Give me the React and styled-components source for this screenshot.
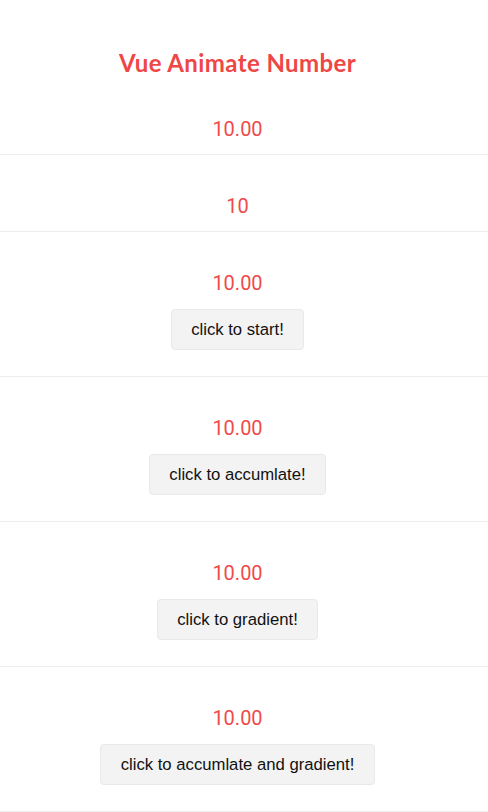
import React from 'react';
import styled, { createGlobalStyle } from 'styled-components';

const GlobalStyle = createGlobalStyle`
    html, body {
        margin: 0;
        padding: 0;
        background: #ffffff;
    }
    body {
        font-family: "Liberation Sans", Arial, sans-serif;
    }
`;

const Page = styled.div`
    width: 100%;
    display: flex;
    flex-direction: column;
`;

const Header = styled.header`
    padding: 48px 13px 0 0;
    text-align: center;
`;

const Title = styled.h1`
    margin: 0;
    font-family: Lato, "Noto Sans", sans-serif;
    font-weight: 700;
    font-size: 24px;
    line-height: 30px;
    letter-spacing: 0.4px;
    color: #ef4646;
`;

const Section = styled.section`
    display: flex;
    flex-direction: column;
    align-items: center;
    padding: 40px 13px 13px 0;
    border-bottom: 1px solid #ececec;
`;

const Value = styled.div`
    font-family: Roboto, "Noto Sans", sans-serif;
    font-size: 20px;
    line-height: 23px;
    color: #ef4a4a;
`;

const ActionButton = styled.button`
    margin: 14px 0 13px;
    padding: 10px 19.5px;
    border: 1px solid #e9e9e9;
    border-radius: 4px;
    background: #f3f3f3;
    color: #111111;
    font-family: "Liberation Sans", Arial, sans-serif;
    font-size: 16.7px;
    line-height: 19px;
    cursor: pointer;
`;

const demos = [
    { value: '10.00' },
    { value: '10' },
    { value: '10.00', action: 'click to start!' },
    { value: '10.00', action: 'click to accumlate!' },
    { value: '10.00', action: 'click to gradient!' },
    { value: '10.00', action: 'click to accumlate and gradient!' }
];

export default function App() {
    return (
        <>
            <GlobalStyle />
            <Page>
                <Header>
                    <Title>Vue Animate Number</Title>
                </Header>
                {demos.map((demo, index) => (
                    <Section key={index}>
                        <Value>{demo.value}</Value>
                        {demo.action && <ActionButton type="button">{demo.action}</ActionButton>}
                    </Section>
                ))}
            </Page>
        </>
    );
}
